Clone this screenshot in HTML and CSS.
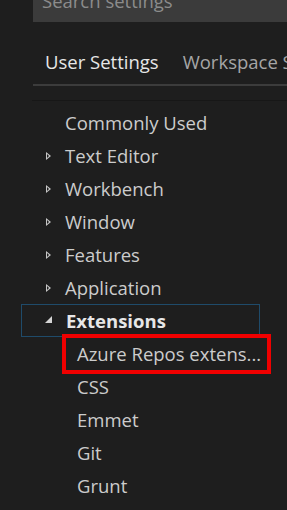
FILE: index.html
```html
<!doctype html>
<html lang="en">
  <head>
    <meta charset="UTF-8" />
    <title>Settings</title>
    <link rel="stylesheet" href="styles.css">
  </head>
  <body>
    <div class="search">Search settings</div>
    <div class="tabs">
      <div class="tab active">User Settings</div>
      <div class="tab">Workspace Settings</div>
    </div>
    <div class="divider"></div>
    <ul class="tree">
      <li class="row"><span class="label">Commonly Used</span></li>
      <li class="row"><span class="twisty"></span><span class="label">Text Editor</span></li>
      <li class="row"><span class="twisty"></span><span class="label">Workbench</span></li>
      <li class="row"><span class="twisty"></span><span class="label">Window</span></li>
      <li class="row"><span class="twisty"></span><span class="label">Features</span></li>
      <li class="row"><span class="twisty"></span><span class="label">Application</span></li>
      <li class="row focused"><span class="twisty open"></span><span class="label">Extensions</span></li>
      <li class="row child"><span class="label marked">Azure Repos extens...</span></li>
      <li class="row child"><span class="label">CSS</span></li>
      <li class="row child"><span class="label">Emmet</span></li>
      <li class="row child"><span class="label">Git</span></li>
      <li class="row child"><span class="label">Grunt</span></li>
    </ul>
  </body>
</html>
```

FILE: styles.css
```css
* {
  margin: 0;
  padding: 0;
  box-sizing: border-box;
}
body {
  background-color: #1e1e1e;
  color: #cccccc;
  font-family: "Open Sans", sans-serif;
  font-size: 18.5px;
  overflow: hidden;
}
.search {
  margin-left: 33px;
  margin-top: -20px;
  height: 42px;
  padding: 0 9px;
  background-color: #3b3b3b;
  color: #8c8c8c;
  line-height: 42px;
  white-space: nowrap;
  overflow: hidden;
}
.tabs {
  display: flex;
  margin-left: 33px;
  margin-top: 18px;
  border-bottom: 2px solid #3c3c3c;
  white-space: nowrap;
  overflow: hidden;
}
.tab {
  padding: 0 12px;
  height: 44px;
  line-height: 44px;
  color: #a6a6a6;
}
.tab.active {
  color: #e7e7e7;
  box-shadow: inset 0 -2px 0 #e7e7e7;
  margin-bottom: -2px;
  height: 46px;
}
.divider {
  margin: 14px 0 0 32px;
  height: 1px;
  background-color: #171717;
}
.tree {
  list-style: none;
  margin-top: 5px;
}
.row {
  display: flex;
  align-items: center;
  height: 33px;
  padding-left: 65px;
  position: relative;
  white-space: nowrap;
}
.twisty {
  position: absolute;
  left: 46px;
  top: 13px;
  width: 0;
  height: 0;
  border-top: 4px solid transparent;
  border-bottom: 4px solid transparent;
  border-left: 5px solid #c5c5c5;
}
.twisty::after {
  content: "";
  position: absolute;
  left: -4px;
  top: -2px;
  border-top: 2px solid transparent;
  border-bottom: 2px solid transparent;
  border-left: 2px solid #1e1e1e;
}
.twisty.open {
  left: 45px;
  top: 12px;
  border: none;
  border-bottom: 7px solid #d4d4d4;
  border-left: 7px solid transparent;
}
.twisty.open::after {
  display: none;
}
.focused {
  margin-left: 21px;
  width: 239px;
  padding-left: 44px;
  border: 1px solid #1f4b6a;
}
.focused .twisty {
  left: 23px;
  top: 11px;
}
.focused .label {
  font-weight: bold;
  color: #e7e7e7;
}
.child {
  padding-left: 77px;
}
.marked {
  margin-left: -15px;
  padding: 3px 0 4px 11px;
  width: 209px;
  border: 4px solid #f00000;
  overflow: hidden;
}
```
